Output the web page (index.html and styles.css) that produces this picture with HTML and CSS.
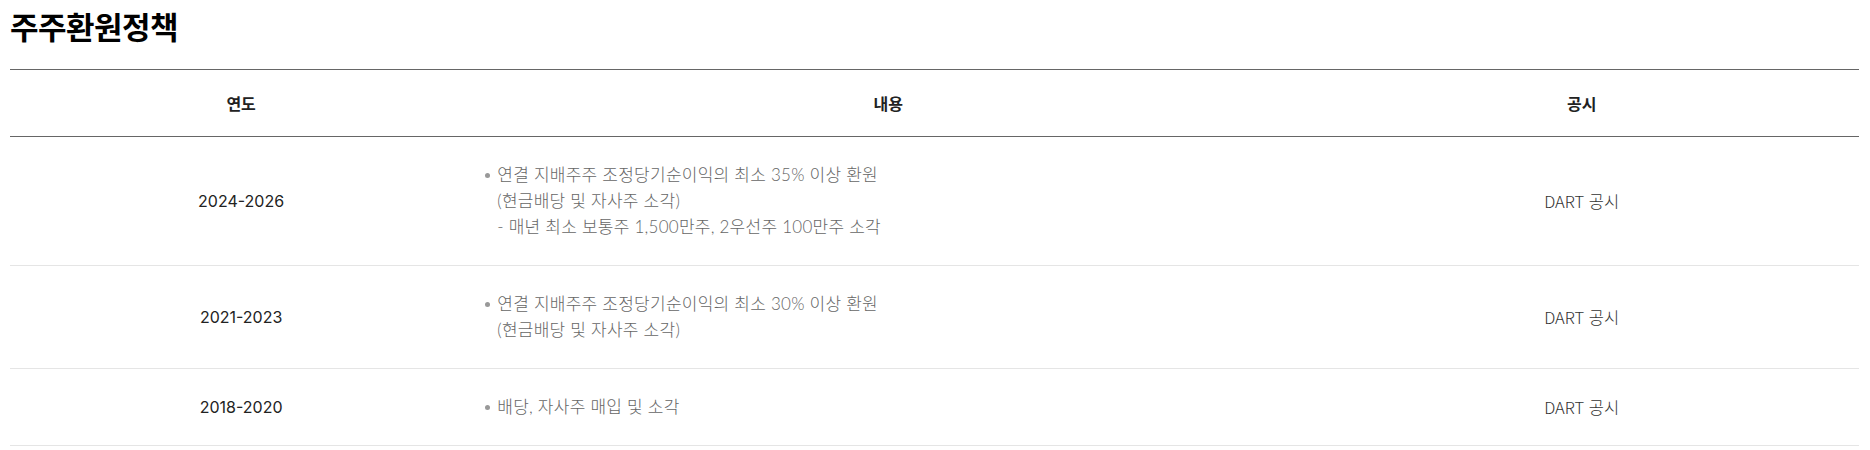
FILE: index.html
```html
<!DOCTYPE html>
<html lang="ko">
<head>
<meta charset="utf-8">
<link rel="stylesheet" href="styles.css">
</head>
<body>
<div class="page">
  <h2 class="title">주주환원정책</h2>
  <table class="policy">
    <colgroup>
      <col class="c-year">
      <col class="c-content">
      <col class="c-notice">
    </colgroup>
    <thead>
      <tr><th>연도</th><th>내용</th><th>공시</th></tr>
    </thead>
    <tbody>
      <tr>
        <td class="year">2024-2026</td>
        <td class="content">
          <ul class="dots"><li>연결 지배주주 조정당기순이익의 최소 35% 이상 환원<br>(현금배당 및 자사주 소각)<br>- 매년 최소 보통주 1,500만주, 2우선주 100만주 소각</li></ul>
        </td>
        <td class="notice">DART 공시</td>
      </tr>
      <tr>
        <td class="year">2021-2023</td>
        <td class="content">
          <ul class="dots"><li>연결 지배주주 조정당기순이익의 최소 30% 이상 환원<br>(현금배당 및 자사주 소각)</li></ul>
        </td>
        <td class="notice">DART 공시</td>
      </tr>
      <tr>
        <td class="year">2018-2020</td>
        <td class="content">
          <ul class="dots"><li>배당, 자사주 매입 및 소각</li></ul>
        </td>
        <td class="notice">DART 공시</td>
      </tr>
    </tbody>
  </table>
</div>
</body>
</html>
```
FILE: styles.css
```css
* { box-sizing: border-box; }
html, body { margin: 0; padding: 0; background: #fff; }
body {
  font-family: "Noto Sans CJK KR", "Noto Sans", sans-serif;
  color: #222;
}
.page { padding: 0 11px 0 10px; }
.title {
  margin: 0;
  padding-top: 5px;
  font-size: 31px;
  line-height: 42px;
  font-weight: 700;
  color: #000;
  letter-spacing: -0.5px;
  height: 69px;
}
.policy {
  width: 100%;
  border-collapse: collapse;
  table-layout: fixed;
  border-top: 1px solid #666;
}
.c-year { width: 25%; }
.c-content { width: 45%; }
.c-notice { width: 30%; }
.policy th {
  font-size: 16px;
  font-weight: 700;
  color: #222;
  line-height: 26px;
  padding: 20px 0;
  border-bottom: 1px solid #666;
  text-align: center;
}
.policy td {
  font-size: 16px;
  line-height: 26px;
  padding: 25px 0;
  border-bottom: 1px solid #e5e5e5;
  vertical-align: middle;
}
.policy .year {
  text-align: center;
  color: #222;
  font-family: Inter, "Noto Sans CJK KR", sans-serif;
}
.policy .notice {
  text-align: center;
  color: #333;
  font-weight: 300;
  font-size: 16.5px;
}
.policy .content {
  color: #666;
  font-family: Lato, "Noto Sans CJK KR", sans-serif;
  font-size: 17px;
  font-weight: 300;
  letter-spacing: 0.25px;
}
.dots { list-style: none; margin: 0; padding: 0 0 0 25px; }
.dots li { position: relative; }
.dots li::before {
  content: "";
  position: absolute;
  left: -12px;
  top: 11px;
  width: 5px;
  height: 5px;
  border-radius: 50%;
  background: #999;
}
```
